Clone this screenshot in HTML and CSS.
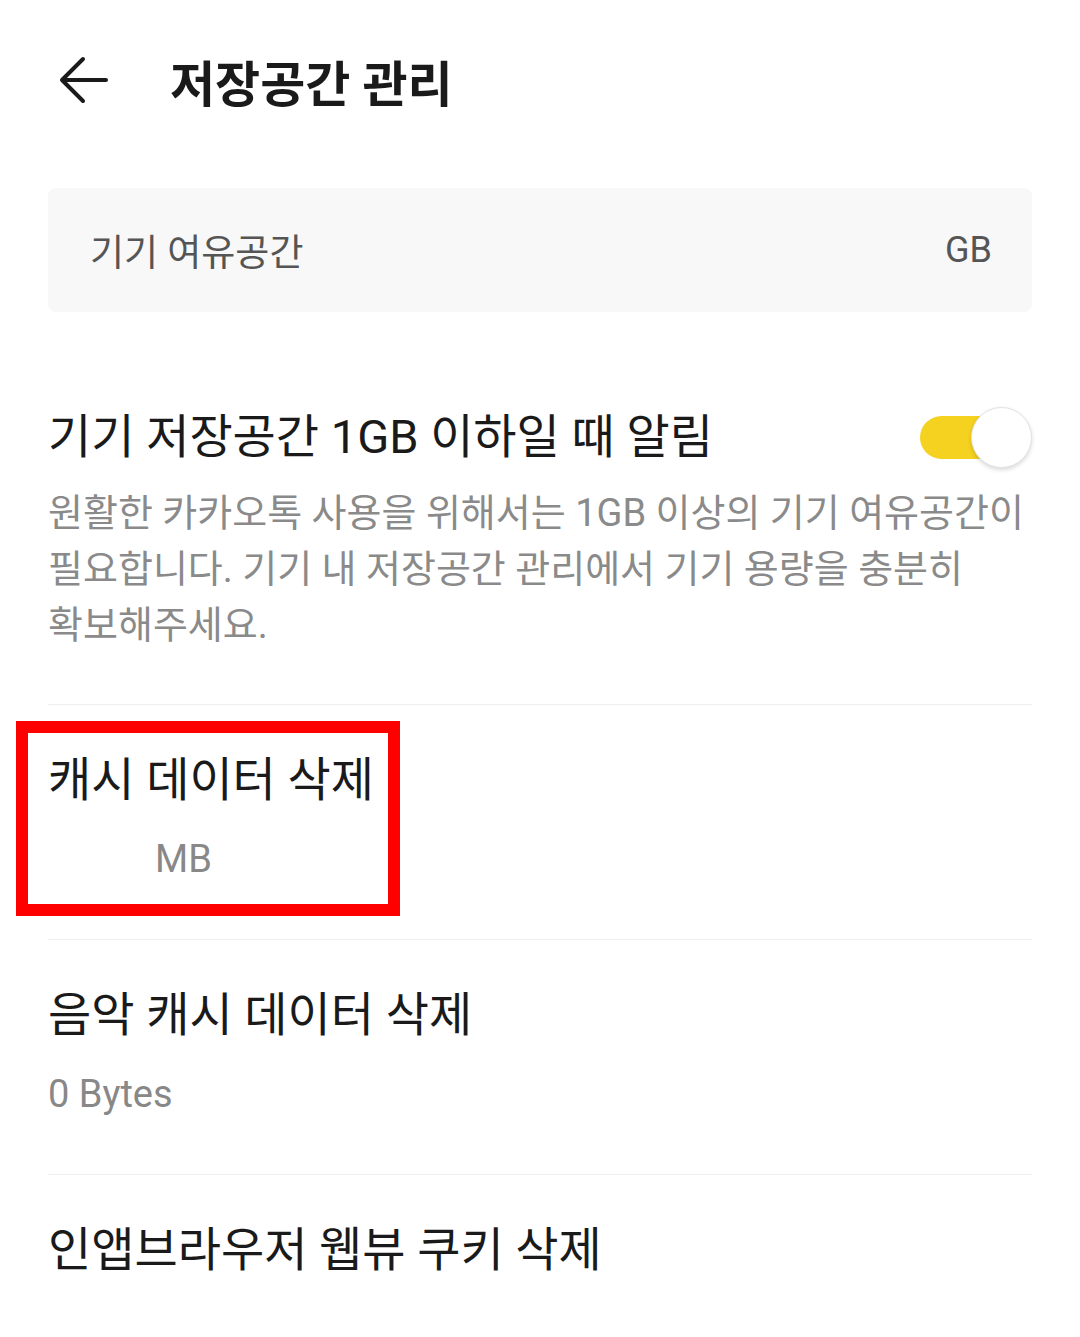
FILE: index.html
```html
<!DOCTYPE html>
<html lang="ko">
<head>
    <meta charset="UTF-8">
    <meta name="viewport" content="width=device-width, initial-scale=1.0">
    <title>저장공간 관리</title>
    <link rel="stylesheet" href="styles.css">
</head>
<body>

    <!-- Header -->
    <header class="top-bar">
        <svg class="back-icon" width="52" height="52" viewBox="0 0 52 52">
            <path d="M4 26 H48 M25 5 L4 26 L25 47" fill="none" stroke="#1a1a1a" stroke-width="4" stroke-linecap="round" stroke-linejoin="round"/>
        </svg>
        <h1 class="page-title">저장공간 관리</h1>
    </header>

    <!-- Free space card -->
    <div class="space-card">
        <span class="space-label">기기 여유공간</span>
        <span class="space-value">GB</span>
    </div>

    <!-- Low storage alert -->
    <section class="alert-section">
        <div class="alert-row">
            <span class="item-title">기기 저장공간 1GB 이하일 때 알림</span>
            <div class="toggle on"></div>
        </div>
        <p class="alert-desc">원활한 카카오톡 사용을 위해서는 1GB 이상의 기기 여유공간이<br>필요합니다. 기기 내 저장공간 관리에서 기기 용량을 충분히<br>확보해주세요.</p>
    </section>

    <div class="item highlighted">
        <div class="item-title">캐시 데이터 삭제</div>
        <div class="item-sub indent">MB</div>
        <div class="mark-box"></div>
    </div>

    <div class="item">
        <div class="item-title">음악 캐시 데이터 삭제</div>
        <div class="item-sub">0 Bytes</div>
    </div>

    <div class="item last">
        <div class="item-title">인앱브라우저 웹뷰 쿠키 삭제</div>
    </div>

</body>
</html>
```

FILE: styles.css
```css
body {
    font-family: Roboto, "Noto Sans CJK KR", sans-serif;
    background-color: #fff;
    color: #1a1a1a;
    margin: 0;
    padding: 0 48px;
}

/* Header */
.top-bar {
    display: flex;
    align-items: center;
    height: 160px;
}
.back-icon {
    margin-left: 10px;
}
.page-title {
    margin: 0 0 0 60px;
    font-size: 49px;
    font-weight: bold;
    color: #1a1a1a;
}

/* Free space card */
.space-card {
    display: flex;
    align-items: center;
    justify-content: space-between;
    margin-top: 28px;
    height: 124px;
    padding: 0 40px 0 42px;
    background-color: #f8f8f8;
    border-radius: 8px;
}
.space-label {
    font-size: 37px;
    color: #555;
}
.space-value {
    font-size: 36px;
    color: #555;
}

/* Alert section */
.alert-section {
    padding: 95px 0 51px;
    border-bottom: 1px solid #eeeeee;
}
.alert-row {
    display: flex;
    align-items: center;
    justify-content: space-between;
}
.alert-desc {
    margin: 18px 0 0;
    font-size: 38px;
    line-height: 56px;
    white-space: nowrap;
    color: #8a8a8a;
}

/* Toggle */
.toggle {
    position: relative;
    width: 108px;
    height: 43px;
    margin-right: 4px;
    border-radius: 22px;
    background-color: #f5d120;
}
.toggle::before {
    content: "";
    position: absolute;
    width: 59px;
    height: 59px;
    top: -9px;
    right: -4px;
    background: white;
    border: 1px solid #e2e2e2;
    border-radius: 50%;
    box-shadow: 0 2px 4px rgba(0, 0, 0, 0.15);
}

/* List items */
.item {
    position: relative;
    padding: 45px 0 55px;
    border-bottom: 1px solid #eeeeee;
}
.item.last {
    border-bottom: none;
}
.item-title {
    font-size: 47px;
    line-height: 60px;
    color: #1a1a1a;
}
.item-sub {
    margin-top: 24px;
    font-size: 38px;
    line-height: 50px;
    color: #888;
}
.item-sub.indent {
    padding-left: 107px;
}

/* Red annotation box */
.mark-box {
    position: absolute;
    left: -32px;
    top: 16px;
    width: 360px;
    height: 171px;
    border: 12px solid #ff0000;
}
```
